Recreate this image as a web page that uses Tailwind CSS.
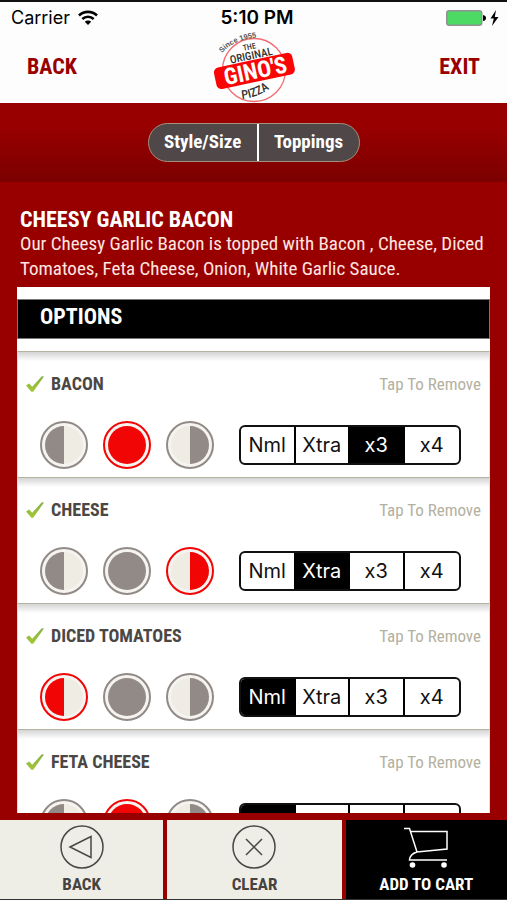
<!DOCTYPE html>
<html lang="en">
<head>
<meta charset="utf-8">
<meta name="viewport" content="width=device-width, initial-scale=1">
<title>Gino's Pizza – Toppings</title>
<script src="https://cdn.jsdelivr.net/npm/@tailwindcss/browser@4"></script>
</head>
<body class="bg-[#980000] font-['Roboto_Condensed','Liberation_Sans_Narrow','Roboto',sans-serif]">
<svg class="absolute size-0" aria-hidden="true">
  <linearGradient id="leaf" x1="0" y1="0" x2="0" y2="1"><stop offset="0" stop-color="#86b04a"/><stop offset="1" stop-color="#a5c834"/></linearGradient>
  <symbol id="left" viewBox="0 0 48 48"><circle cx="24" cy="24" r="23" fill="#f6f4f1" stroke="currentColor" stroke-width="2"/><circle cx="24" cy="24" r="19" fill="#eeece3"/><path d="M24 5a19 19 0 0 0 0 38z" fill="currentColor"/></symbol>
  <symbol id="whole" viewBox="0 0 48 48"><circle cx="24" cy="24" r="23" fill="#f6f4f1" stroke="currentColor" stroke-width="2"/><circle cx="24" cy="24" r="19" fill="currentColor"/></symbol>
  <symbol id="right" viewBox="0 0 48 48"><circle cx="24" cy="24" r="23" fill="#f6f4f1" stroke="currentColor" stroke-width="2"/><circle cx="24" cy="24" r="19" fill="#eeece3"/><path d="M24 5a19 19 0 0 1 0 38z" fill="currentColor"/></symbol>
  <symbol id="tick" viewBox="0 0 20 18"><path d="M1 10.500 4.200 8.500 7.200 11.800 16.800 1.200 19 1.500 8.200 16.800 6.300 16.800z" fill="url(#leaf)"/></symbol>
</svg>
<div class="flex h-screen flex-col">
  <header class="border-t-2 border-[#111] bg-[#fdfdfd] h-[103px] shrink-0">
    <div class="grid grid-cols-3 items-center pr-2 pl-[11px] pt-1 font-['Inter',sans-serif] text-[19px] leading-6 text-black">
      <div class="flex items-center gap-2 text-[18px]"><span>Carrier</span>
        <svg class="h-4 w-5" viewBox="0 0 20 16" fill="none" stroke="#000" stroke-width="2.600" aria-hidden="true"><path d="M1 5.500a13 13 0 0 1 18 0M4.300 9a8.300 8.300 0 0 1 11.400 0"/><path d="M10 15 6.800 11.800a4.500 4.500 0 0 1 6.400 0z" fill="#000" stroke="none"/></svg>
      </div>
      <span class="justify-self-center whitespace-nowrap pl-1 font-semibold">5:10 PM</span>
      <svg class="h-4 w-[53px] justify-self-end" viewBox="0 0 53 16" aria-label="Battery charging"><rect x=".75" y=".75" width="35" height="14.500" rx="2.500" fill="#4cd964" stroke="#929292" stroke-width="1.500"/><path d="M37 5q3 .5 3 3t-3 3z"/><path d="M50 0 44.500 8.500h3.300L46 16l6.500-9h-3.700z"/></svg>
    </div>
    <div class="grid grid-cols-3 items-center px-[27px] text-[22px] font-bold text-[#980000]">
      <button class="justify-self-start">BACK</button>
      <svg class="h-[72px] w-[84px] justify-self-center overflow-visible" viewBox="0 0 84 72" role="img" aria-label="The Original Gino's Pizza, since 1955">
        <circle cx="42" cy="40" r="31.500" fill="#fff" stroke="#f26b6f" stroke-width="1.300"/>
        <path id="arc" d="M10 23Q22 9 48 7" fill="none"/>
        <text font-family="Liberation Sans" font-size="7.500" fill="#555"><textPath href="#arc">Since 1955</textPath></text>
        <g transform="rotate(-12 42 39)" text-anchor="middle" fill="#333">
          <text x="42" y="19" font-size="8" font-weight="500">THE</text>
          <text x="42" y="29" font-size="11" font-weight="500">ORIGINAL</text>
          <rect x="2" y="30" width="80" height="22" rx="5" fill="#fa0505"/>
          <text x="43" y="49" font-size="23" font-weight="bold" fill="#fff">GINO'S</text>
        </g>
        <path id="low" d="M26 69Q46 69 64 54" fill="none"/>
        <text font-size="12" font-weight="500" fill="#333"><textPath href="#low" startOffset="4">PIZZA</textPath></text>
      </svg>
      <button class="justify-self-end">EXIT</button>
    </div>
  </header>

  <nav class="flex shrink-0 justify-center bg-linear-to-b from-[#980000] from-30% to-[#7c0000] pt-5 pb-5">
    <div class="flex h-[39px] w-[212px] overflow-hidden rounded-full border border-[#a58f7c] bg-[#504848] text-[19px] font-bold text-white">
      <button class="flex-auto border-r-2 border-white">Style/Size</button>
      <button class="flex-auto">Toppings</button>
    </div>
  </nav>

  <main class="flex min-h-0 flex-1 flex-col px-[17px] pt-[27px]">
    <h1 class="pl-[3px] text-[22px] leading-[22px] font-bold text-white">CHEESY GARLIC BACON</h1>
    <p class="pl-[3px] text-[19px] leading-[25px] text-[#ffe6e0]">Our Cheesy Garlic Bacon is topped with Bacon , Cheese, Diced Tomatoes, Feta Cheese, Onion, White Garlic Sauce.</p>
    <section class="mt-[6px] min-h-0 flex-1 overflow-hidden bg-white pt-3">
      <h2 class="mb-3 border border-[#777] bg-black px-[22px] pb-1 text-[22px] leading-[34px] font-bold text-white">OPTIONS</h2>
      <div id="toppings"></div>
    </section>
  </main>

  <footer class="mt-[7px] grid shrink-0 grid-cols-[163fr_174fr_161fr] gap-1 border-b border-[#333] text-[17px] leading-5 font-bold text-[#45423f]">
    <button class="flex flex-col items-center gap-[5px] bg-[#eeede6] pt-[5px] pb-[5px]">
      <svg class="h-11 w-11" viewBox="0 0 44 44" fill="none" stroke="#4a4744" stroke-width="1.500" aria-hidden="true"><circle cx="22" cy="22" r="21"/><path d="M10 22 31 11.500v21z"/></svg>BACK</button>
    <button class="flex flex-col items-center gap-[5px] bg-[#eeede6] pt-[5px] pb-[5px]">
      <svg class="h-11 w-11" viewBox="0 0 44 44" fill="none" stroke="#4a4744" stroke-width="1.500" aria-hidden="true"><circle cx="22" cy="22" r="21"/><path d="m14 14 16 16M30 14 14 30"/></svg>CLEAR</button>
    <button class="flex flex-col items-center gap-[5px] bg-black pt-[5px] pb-[5px] text-white">
      <svg class="h-11 w-11" viewBox="0 0 44 44" fill="none" stroke="#fff" stroke-width="1.500" aria-hidden="true"><path d="M0 3.500h5.500L13 27 43 24V6.500H7M13 27Q6 29 5.500 35H43"/><circle cx="8.500" cy="40" r="2.800" fill="#fff" stroke="none"/><circle cx="40" cy="40" r="2.800" fill="#fff" stroke="none"/></svg>ADD TO CART</button>
  </footer>
</div>
<script>
const toppings = [
  ["BACON", "whole", "x3"],
  ["CHEESE", "right", "Xtra"],
  ["DICED TOMATOES", "left", "Nml"],
  ["FETA CHEESE", "whole", "Nml"],
];
document.getElementById("toppings").innerHTML = toppings.map(([name, side, amount], i) => `
  <div class="h-[126px] border-x border-t border-x-[#ddd] border-t-[#b5b3a0] bg-linear-to-b from-[#d4d4d4] to-white to-[9px] px-[7px] pt-5">
    <div class="flex h-6 items-center">
      <svg class="h-[18px] w-5" aria-hidden="true"><use href="#tick"/></svg>
      <h3 class="flex-1 pl-[6px] text-[18px] leading-6 font-bold text-[#4a4744]">${name}</h3>
      <button class="pr-px text-[17px] leading-6 text-[#b3b1a0]">Tap To Remove</button>
    </div>
    <div class="mt-[25px] flex items-center justify-between pr-[21px] pl-[15px]">
      <div class="flex gap-[15px]" role="radiogroup" aria-label="${name} side">
        ${["left", "whole", "right"].map(s => `<label class="relative block text-[#918a86] has-checked:text-[#f20505]"><input class="sr-only" type="radio" name="side${i}" aria-label="${s}" ${s === side ? "checked" : ""}><svg class="size-12" aria-hidden="true"><use href="#${s}"/></svg></label>`).join("")}
      </div>
      <div class="grid h-10 w-[222px] grid-cols-4 divide-x-2 divide-black overflow-hidden rounded-md border-2 border-[#111] font-['Inter',sans-serif] text-[20px] text-[#111]" role="radiogroup" aria-label="${name} amount">
        ${["Nml", "Xtra", "x3", "x4"].map(a => `<label class="relative flex items-center justify-center has-checked:bg-black has-checked:text-white"><input class="sr-only" type="radio" name="amount${i}" ${a === amount ? "checked" : ""}>${a}</label>`).join("")}
      </div>
    </div>
  </div>`).join("");
</script>
</body>
</html>
